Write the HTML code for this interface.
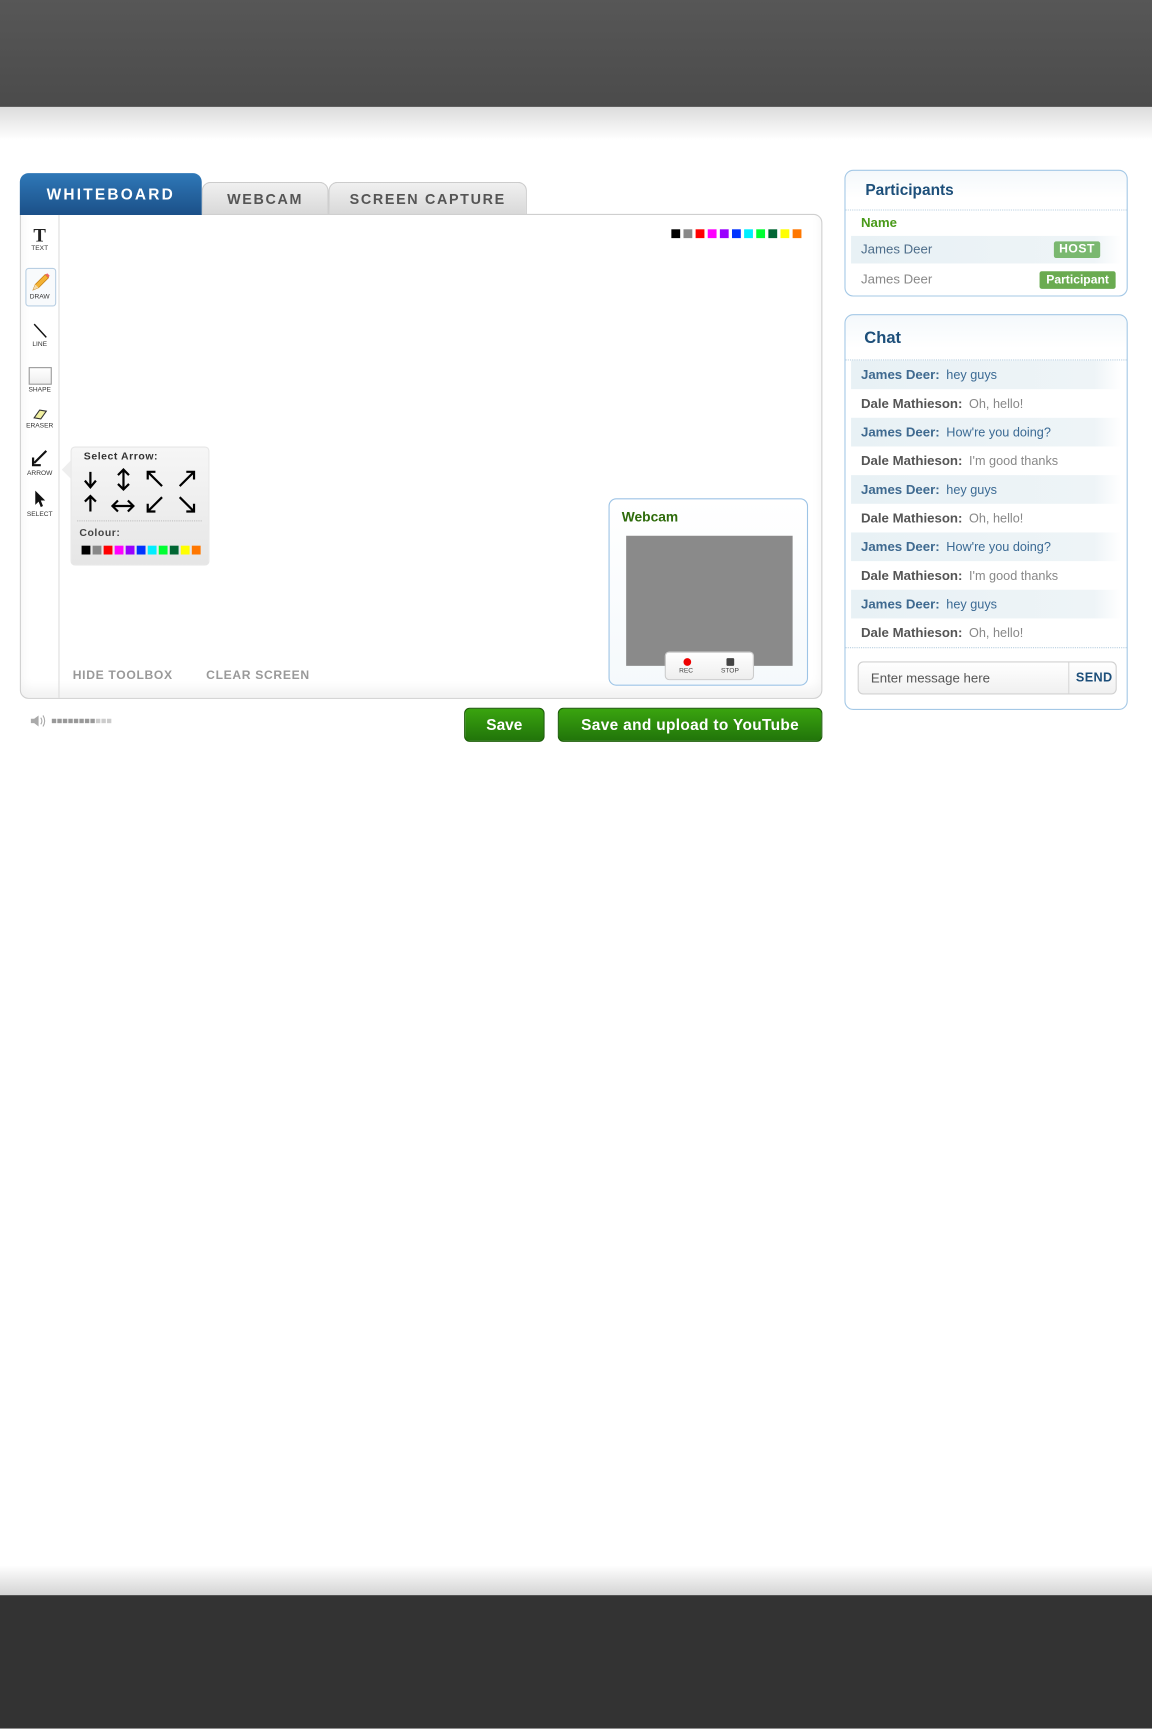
<!DOCTYPE html>
<html><head><meta charset="utf-8"><style>
html,body{margin:0;padding:0;width:1152px;height:1728px;overflow:hidden;background:#fff;font-family:"Liberation Sans",Arial,sans-serif}
#w{position:absolute;left:0;top:0;width:1045px;height:1568px;transform:scale(1.102392);transform-origin:0 0}
.a{position:absolute}
.tab{position:absolute;font-weight:bold;letter-spacing:1.5px;text-align:center;border-radius:8px 8px 0 0}
.sw span{display:inline-block;width:8px;height:8px;margin-right:3px;vertical-align:top}
.tool{position:absolute;left:18px;width:36px;text-align:center;font-size:6px;color:#333}
.row{position:absolute;left:772px;width:245px;height:26px;line-height:26px;font-size:11.5px;padding-left:9px;box-sizing:border-box}
.row b{font-size:12px;margin-right:6px}
.bl{color:#3b6a94}.gr{color:#666}
.row.bl{background:linear-gradient(90deg,#e8f1f5,#eef4f7 90%,#fff)}
.row b.bl{color:#3f6a90}.row b.gr{color:#555}
.btn{position:absolute;background:linear-gradient(#3aa40f,#21740a);border:1px solid #1c5e08;border-radius:5px;color:#fff;font-weight:bold;font-size:14px;text-align:center;box-sizing:border-box}
</style></head><body><div id="w">
<div class="a" style="left:0;top:0;width:1045px;height:97px;background:linear-gradient(#575757,#4b4b4b)"></div>
<div class="a" style="left:0;top:97px;width:1045px;height:30px;background:linear-gradient(#dcdcdc,#fff)"></div>
<div class="a" style="left:0;top:1420px;width:1045px;height:27px;background:linear-gradient(#fff,#d4d4d4)"></div>
<div class="a" style="left:0;top:1447px;width:1045px;height:121px;background:#333"></div>

<div class="tab" style="left:183px;top:165px;width:115px;height:30px;line-height:30px;background:linear-gradient(#f0f0f0,#d8d8d8);color:#555;font-size:13px;border:1px solid #ccc;border-bottom:0;box-sizing:border-box">WEBCAM</div>
<div class="tab" style="left:298px;top:165px;width:180px;height:30px;line-height:30px;background:linear-gradient(#f0f0f0,#d8d8d8);color:#555;font-size:13px;border:1px solid #ccc;border-bottom:0;box-sizing:border-box">SCREEN CAPTURE</div>
<div class="a" style="left:18px;top:194px;width:728px;height:440px;border:1px solid #cfcfcf;border-radius:0 8px 8px 8px;box-sizing:border-box;background:#fff;box-shadow:inset 0 -8px 10px #f2f2f2"></div>
<div class="tab" style="left:18px;top:157px;width:165px;height:38px;line-height:38px;background:linear-gradient(#2f78b8,#1b5088);color:#fff;font-size:14px;letter-spacing:2px">WHITEBOARD</div>
<div class="a" style="left:53px;top:195px;width:1px;height:438px;background:#ddd"></div>

<div class="a sw" style="left:609px;top:208px;width:130px"><span style="background:#000"></span><span style="background:#888"></span><span style="background:#f00"></span><span style="background:#f0f"></span><span style="background:#90f"></span><span style="background:#03f"></span><span style="background:#0ef"></span><span style="background:#0f3"></span><span style="background:#063"></span><span style="background:#ff0"></span><span style="background:#f70"></span></div>

<div class="tool" style="top:204px"><div style="font:bold 17px 'Liberation Serif',serif;color:#222;height:19px">T</div>TEXT</div>
<div class="a" style="left:23px;top:243px;width:26px;height:33px;border:1px solid #b9cfe3;border-radius:3px;background:#f8fafc"></div>
<div class="tool" style="top:246px"><svg width="20" height="20" viewBox="0 0 20 20"><path d="M4 17 L6 12 L15 3 L18 6 L9 15 Z" fill="#f3b233" stroke="#c47c10" stroke-width=".7"/><path d="M15 3 L18 6 L19 4 L17 2Z" fill="#e66"/><path d="M4 17 L6 12 L9 15Z" fill="#f4d9a6"/></svg><div style="margin-top:-1px">DRAW</div></div>
<div class="tool" style="top:292px"><svg width="16" height="16"><line x1="3" y1="2" x2="14" y2="14" stroke="#111" stroke-width="1.3"/></svg><div>LINE</div></div>
<div class="tool" style="top:333px"><div style="width:19px;height:14px;border:1px solid #999;margin:0 auto 2px;background:linear-gradient(#fff,#eee)"></div>SHAPE</div>
<div class="tool" style="top:370px"><svg width="14" height="12"><path d="M2 9 L7 2 L13 3 L8 10 Z" fill="#f1f0a0" stroke="#333"/></svg><div>ERASER</div></div>
<div class="tool" style="top:407px"><svg width="18" height="18"><path d="M15 2 L4 13 M3 8 L3 15 L10 15" stroke="#111" stroke-width="2" fill="none"/></svg><div>ARROW</div></div>
<div class="tool" style="top:444px"><svg width="14" height="18"><path d="M3 1 L3 14 L6 11 L8 16 L10 15 L8 10 L12 10 Z" fill="#111"/></svg><div>SELECT</div></div>

<div class="a" style="left:64px;top:405px;width:126px;height:108px;background:linear-gradient(#f6f6f6,#e6e6e6);border:1px solid #e6e6e6;border-radius:4px;box-sizing:border-box"></div>
<div class="a" style="left:56px;top:418px;width:0;height:0;border:8px solid transparent;border-right-color:#eee;border-left:0"></div>
<div class="a" style="left:76px;top:409px;font-size:9.5px;font-weight:bold;color:#333;letter-spacing:.5px">Select Arrow:</div>
<svg class="a" style="left:72px;top:424px" width="112" height="46" viewBox="0 0 112 46" fill="none" stroke="#000" stroke-width="2">
<path d="M10 4 V17 M5 12 L10 18 L15 12"/>
<path d="M40 2 V20 M35 7 L40 2 L45 7 M35 15 L40 20 L45 15"/>
<path d="M62 4 L75 17 M62 11 V4 H69"/>
<path d="M104 4 L91 17 M97 4 H104 V11"/>
<path d="M10 40 V26 M5 31 L10 26 L15 31"/>
<path d="M30 35 H49 M35 30 L30 35 L35 40 M44 30 L49 35 L44 40"/>
<path d="M75 27 L62 40 M62 33 V40 H69"/>
<path d="M91 27 L104 40 M97 40 H104 V33"/>
</svg>
<div class="a" style="left:70px;top:472px;width:113px;border-top:1px dotted #bbb"></div>
<div class="a" style="left:72px;top:478px;font-size:9.5px;font-weight:bold;color:#444;letter-spacing:.5px">Colour:</div>
<div class="a sw" style="left:74px;top:495px;width:120px"><span style="background:#000;margin-right:2px"></span><span style="background:#888;margin-right:2px"></span><span style="background:#f00;margin-right:2px"></span><span style="background:#f0f;margin-right:2px"></span><span style="background:#90f;margin-right:2px"></span><span style="background:#03f;margin-right:2px"></span><span style="background:#0ef;margin-right:2px"></span><span style="background:#0f3;margin-right:2px"></span><span style="background:#063;margin-right:2px"></span><span style="background:#ff0;margin-right:2px"></span><span style="background:#f70"></span></div>

<div class="a" style="left:66px;top:607px;font-size:11px;font-weight:bold;color:#999;letter-spacing:.6px">HIDE TOOLBOX</div>
<div class="a" style="left:187px;top:607px;font-size:11px;font-weight:bold;color:#999;letter-spacing:.6px">CLEAR SCREEN</div>

<div class="a" style="left:552px;top:452px;width:181px;height:170px;border:1px solid #9dc4e6;border-radius:7px;box-sizing:border-box;background:linear-gradient(#fff,#f5f9fc)"></div>
<div class="a" style="left:564px;top:462px;font-size:12.5px;font-weight:bold;color:#2e6b0b">Webcam</div>
<div class="a" style="left:568px;top:486px;width:151px;height:118px;background:#8a8a8a"></div>
<div class="a" style="left:603px;top:591px;width:81px;height:26px;background:linear-gradient(#fff,#eee);border:1px solid #ccc;border-radius:4px;box-sizing:border-box"></div>
<div class="a" style="left:620px;top:597px;width:7px;height:7px;border-radius:50%;background:#e00"></div>
<div class="a" style="left:659px;top:597px;width:7px;height:7px;border-radius:1px;background:#444"></div>
<div class="a" style="left:616px;top:606px;font-size:6px;color:#444">REC</div>
<div class="a" style="left:654px;top:606px;font-size:6px;color:#444">STOP</div>

<svg class="a" style="left:27px;top:648px" width="16" height="12"><path d="M1 4 H4 L8 1 V11 L4 8 H1Z" fill="#aaa"/><path d="M10 3 Q12 6 10 9 M12 1 Q15 6 12 11" stroke="#aaa" fill="none"/></svg>
<div class="a" style="left:47px;top:652px;font-size:0">
<span style="display:inline-block;width:4px;height:4px;background:#999;margin-right:1px"></span><span style="display:inline-block;width:4px;height:4px;background:#999;margin-right:1px"></span><span style="display:inline-block;width:4px;height:4px;background:#999;margin-right:1px"></span><span style="display:inline-block;width:4px;height:4px;background:#999;margin-right:1px"></span><span style="display:inline-block;width:4px;height:4px;background:#999;margin-right:1px"></span><span style="display:inline-block;width:4px;height:4px;background:#999;margin-right:1px"></span><span style="display:inline-block;width:4px;height:4px;background:#999;margin-right:1px"></span><span style="display:inline-block;width:4px;height:4px;background:#999;margin-right:1px"></span><span style="display:inline-block;width:4px;height:4px;background:#ccc;margin-right:1px"></span><span style="display:inline-block;width:4px;height:4px;background:#ccc;margin-right:1px"></span><span style="display:inline-block;width:4px;height:4px;background:#ccc"></span></div>

<div class="btn" style="left:421px;top:642px;width:73px;height:31px;line-height:29px">Save</div>
<div class="btn" style="left:506px;top:642px;width:240px;height:31px;line-height:29px;letter-spacing:.3px">Save and upload to YouTube</div>

<div class="a" style="left:766px;top:154px;width:257px;height:115px;border:1px solid #a4c8e6;border-radius:8px;box-sizing:border-box;background:linear-gradient(#f4f8fb,#fff 25px)"></div>
<div class="a" style="left:785px;top:164px;font-size:14px;font-weight:bold;color:#1d4f7a">Participants</div>
<div class="a" style="left:767px;top:190px;width:255px;border-top:1px dotted #b8cfe0"></div>
<div class="a" style="left:781px;top:195px;font-size:12px;font-weight:bold;color:#4a9a1a">Name</div>
<div class="row" style="top:214px;height:25px;line-height:25px;background:linear-gradient(90deg,#e8f1f5,#eef4f7 90%,#fff);color:#4d6d8a;font-size:12px">James Deer</div>
<div class="a" style="left:956px;top:219px;width:42px;height:15px;line-height:15px;background:#7ab870;color:#fff;font-size:11px;font-weight:bold;text-align:center;border-radius:2px;letter-spacing:.5px">HOST</div>
<div class="row" style="top:240px;color:#888;font-size:12px">James Deer</div>
<div class="a" style="left:943px;top:246px;width:69px;height:16px;line-height:16px;background:#6aab50;color:#fff;font-size:11px;font-weight:bold;text-align:center;border-radius:2px">Participant</div>

<div class="a" style="left:766px;top:285px;width:257px;height:359px;border:1px solid #a4c8e6;border-radius:8px;box-sizing:border-box;background:linear-gradient(#f4f8fb,#fff 30px)"></div>
<div class="a" style="left:784px;top:298px;font-size:15px;font-weight:bold;color:#1d4f7a">Chat</div>
<div class="a" style="left:767px;top:326px;width:255px;border-top:1px dotted #b8cfe0"></div>
<div class="row bl" style="top:327px"><b class="bl">James Deer:</b><span class="bl">hey guys</span></div>
<div class="row" style="top:353px"><b class="gr">Dale Mathieson:</b><span style="color:#888">Oh, hello!</span></div>
<div class="row bl" style="top:379px"><b class="bl">James Deer:</b><span class="bl">How're you doing?</span></div>
<div class="row" style="top:405px"><b class="gr">Dale Mathieson:</b><span style="color:#888">I'm good thanks</span></div>
<div class="row bl" style="top:431px"><b class="bl">James Deer:</b><span class="bl">hey guys</span></div>
<div class="row" style="top:457px"><b class="gr">Dale Mathieson:</b><span style="color:#888">Oh, hello!</span></div>
<div class="row bl" style="top:483px"><b class="bl">James Deer:</b><span class="bl">How're you doing?</span></div>
<div class="row" style="top:509px"><b class="gr">Dale Mathieson:</b><span style="color:#888">I'm good thanks</span></div>
<div class="row bl" style="top:535px"><b class="bl">James Deer:</b><span class="bl">hey guys</span></div>
<div class="row" style="top:561px"><b class="gr">Dale Mathieson:</b><span style="color:#888">Oh, hello!</span></div>
<div class="a" style="left:767px;top:587px;width:255px;border-top:1px dotted #b8cfe0"></div>
<div class="a" style="left:778px;top:600px;width:235px;height:30px;border:1px solid #d0d0d0;border-radius:5px;box-sizing:border-box;background:linear-gradient(#fff,#f0f0f0)"></div>
<div class="a" style="left:969px;top:601px;width:1px;height:28px;background:#d8d8d8"></div>
<div class="a" style="left:790px;top:608px;font-size:12px;color:#555">Enter message here</div>
<div class="a" style="left:976px;top:609px;font-size:11.5px;font-weight:bold;color:#1d4f7a;letter-spacing:.3px">SEND</div>
</div></body></html>
